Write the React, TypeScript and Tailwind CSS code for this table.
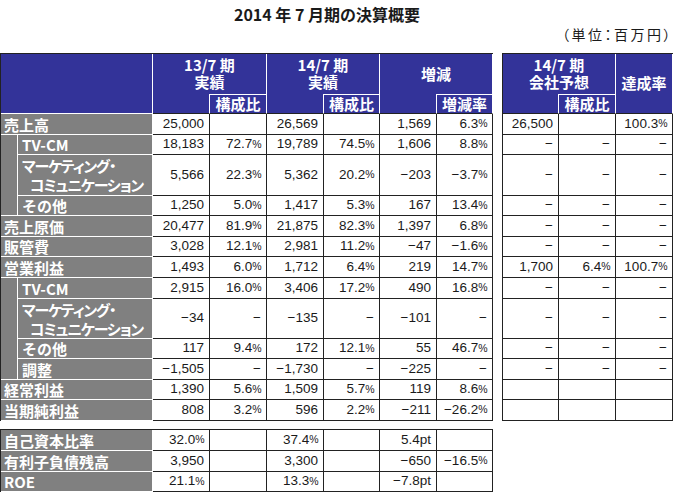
import React from "react";

type Kind = "top" | "sub" | "subLast";
interface RowDef {
  label: string;
  label2?: string;
  kind: Kind;
  h: string;
  vals: string[];
  right: string[];
}

const D = "−";

const ROWS: RowDef[] = [
  { label: "売上高", kind: "top", h: "h-[21px]", vals: ["25,000", "", "26,569", "", "1,569", "6.3%"], right: ["26,500", "", "100.3%"] },
  { label: "TV-CM", kind: "sub", h: "h-[20px]", vals: ["18,183", "72.7%", "19,789", "74.5%", "1,606", "8.8%"], right: [D, D, D] },
  { label: "マーケティング・", label2: "コミュニケーション", kind: "sub", h: "h-[41px]", vals: ["5,566", "22.3%", "5,362", "20.2%", D + "203", D + "3.7%"], right: [D, D, D] },
  { label: "その他", kind: "subLast", h: "h-[20px]", vals: ["1,250", "5.0%", "1,417", "5.3%", "167", "13.4%"], right: [D, D, D] },
  { label: "売上原価", kind: "top", h: "h-[21px]", vals: ["20,477", "81.9%", "21,875", "82.3%", "1,397", "6.8%"], right: [D, D, D] },
  { label: "販管費", kind: "top", h: "h-[20px]", vals: ["3,028", "12.1%", "2,981", "11.2%", D + "47", D + "1.6%"], right: [D, D, D] },
  { label: "営業利益", kind: "top", h: "h-[21px]", vals: ["1,493", "6.0%", "1,712", "6.4%", "219", "14.7%"], right: ["1,700", "6.4%", "100.7%"] },
  { label: "TV-CM", kind: "sub", h: "h-[21px]", vals: ["2,915", "16.0%", "3,406", "17.2%", "490", "16.8%"], right: [D, D, D] },
  { label: "マーケティング・", label2: "コミュニケーション", kind: "sub", h: "h-[40px]", vals: [D + "34", D, D + "135", D, D + "101", D], right: [D, D, D] },
  { label: "その他", kind: "sub", h: "h-[20px]", vals: ["117", "9.4%", "172", "12.1%", "55", "46.7%"], right: [D, D, D] },
  { label: "調整", kind: "subLast", h: "h-[21px]", vals: [D + "1,505", D, D + "1,730", D, D + "225", D], right: [D, D, D] },
  { label: "経常利益", kind: "top", h: "h-[20px]", vals: ["1,390", "5.6%", "1,509", "5.7%", "119", "8.6%"], right: ["", "", ""] },
  { label: "当期純利益", kind: "top", h: "h-[21px]", vals: ["808", "3.2%", "596", "2.2%", D + "211", D + "26.2%"], right: ["", "", ""] },
];

const BOTTOM: RowDef[] = [
  { label: "自己資本比率", kind: "top", h: "h-[21px]", vals: ["32.0%", "", "37.4%", "", "5.4pt", ""], right: [] },
  { label: "有利子負債残高", kind: "top", h: "h-[21px]", vals: ["3,950", "", "3,300", "", D + "650", D + "16.5%"], right: [] },
  { label: "ROE", kind: "top", h: "h-[20px]", vals: ["21.1%", "", "13.3%", "", D + "7.8pt", ""], right: [] },
];

const LW = ["w-[57px]", "w-[57px]", "w-[57px]", "w-[56px]", "w-[57px]", "w-[56px]"];
const RW = ["w-[56px]", "w-[57px]", "w-[57px]"];

const JP = "font-['Noto_Sans_CJK_JP',sans-serif]";
const NUM = "font-['Liberation_Sans',Arial,sans-serif] text-[13.5px] text-[#1a1a1a]";

function Num({ v }: { v: string }) {
  if (v.endsWith("%")) {
    return (
      <>
        {v.slice(0, -1)}
        <span className="text-[10.5px] tracking-[-0.5px]">%</span>
      </>
    );
  }
  return <>{v}</>;
}

function DataCell({ w, v }: { w: string; v: string }) {
  return (
    <div className={`${w} shrink-0 flex items-center justify-end pr-[5px] border-r border-b border-[#222] ${NUM}`}>
      <Num v={v} />
    </div>
  );
}

function LabelCells({ r }: { r: RowDef }) {
  const lab = `${JP} text-white font-bold text-[15px] leading-[19px] whitespace-nowrap`;
  if (r.kind === "top") {
    return (
      <div className={`w-[152px] shrink-0 flex items-center pl-[3px] bg-[#808080] border-r border-b border-white ${lab}`}>
        {r.label}
      </div>
    );
  }
  return (
    <>
      <div
        className={
          r.kind === "subLast"
            ? "w-[17px] shrink-0 bg-[#808080] border-r border-b border-white"
            : "w-[17px] shrink-0 bg-[#808080] border-r border-white"
        }
      />
      <div className={`w-[135px] shrink-0 flex flex-col justify-center pl-[4px] bg-[#808080] border-r border-b border-white ${lab}`}>
        {r.label2 ? (
          <div className="tracking-[-1.2px] [font-feature-settings:'palt']">
            {r.label}
            <br />
            <span className="pl-[8px]">{r.label2}</span>
          </div>
        ) : (
          <div>{r.label}</div>
        )}
      </div>
    </>
  );
}

function HeadGroup({ w, wa, wb, line1, line2, sub }: { w: string; wa: string; wb: string; line1: string; line2?: string; sub: string }) {
  return (
    <div className={`${w} shrink-0 h-[60px] flex flex-col`}>
      <div className="h-[40px] pb-[2px] bg-[#333399] border-r border-white flex items-center justify-center text-center leading-[17px]">
        <div>
          {line1}
          {line2 && (
            <>
              <br />
              {line2}
            </>
          )}
        </div>
      </div>
      <div className="h-[20px] flex">
        <div className={`${wa} shrink-0 bg-[#333399] border-r border-b border-r-white border-b-[#222]`} />
        <div className={`${wb} shrink-0 bg-[#333399] border-t border-r border-b border-t-white border-r-white border-b-[#222] flex items-center justify-center leading-[18px]`}>
          {sub}
        </div>
      </div>
    </div>
  );
}

export default function App() {
  const headText = `${JP} text-white font-bold text-[15px]`;
  return (
    <div className="w-[673px] h-[492px] bg-white overflow-hidden text-[#1a1a1a]">
      <div className={`h-[27px] flex items-center justify-center pr-[19px] text-[16px] font-bold ${JP}`}>
        2014 年 7 月期の決算概要
      </div>
      <div className={`h-[14px] mb-[12px] flex items-center justify-end text-[14px] leading-none tracking-[2.5px] [font-feature-settings:'palt'] ${JP}`}>
        （単位：百万円）
      </div>

      <div className="flex gap-[9px]">
        {/* left table */}
        <div className="w-[493px] shrink-0 border-l border-t border-[#222]">
          <div className={`flex h-[60px] ${headText}`}>
            <div className="w-[152px] shrink-0 h-[60px] bg-[#333399] border-r border-b border-white" />
            <HeadGroup w="w-[114px]" wa="w-[57px]" wb="w-[57px]" line1="13/7 期" line2="実績" sub="構成比" />
            <HeadGroup w="w-[113px]" wa="w-[57px]" wb="w-[56px]" line1="14/7 期" line2="実績" sub="構成比" />
            <HeadGroup w="w-[113px]" wa="w-[57px]" wb="w-[56px]" line1="増減" sub="増減率" />
          </div>
          {ROWS.map((r, i) => (
            <div key={i} className={`flex ${r.h}`}>
              <LabelCells r={r} />
              {r.vals.map((v, j) => (
                <DataCell key={j} w={LW[j]} v={v} />
              ))}
            </div>
          ))}
        </div>

        {/* right table */}
        <div className="w-[171px] shrink-0 self-start border-l border-t border-[#222]">
          <div className={`flex h-[60px] ${headText}`}>
            <HeadGroup w="w-[113px]" wa="w-[56px]" wb="w-[57px]" line1="14/7 期" line2="会社予想" sub="構成比" />
            <div className="w-[57px] shrink-0 h-[60px] bg-[#333399] border-r border-b border-r-white border-b-[#222] flex items-center justify-center">
              達成率
            </div>
          </div>
          {ROWS.map((r, i) => (
            <div key={i} className={`flex ${r.h}`}>
              {r.right.map((v, j) => (
                <DataCell key={j} w={RW[j]} v={v} />
              ))}
            </div>
          ))}
        </div>
      </div>

      {/* bottom table */}
      <div className="mt-[8px] w-[493px] border-l border-t border-[#222]">
        {BOTTOM.map((r, i) => (
          <div key={i} className={`flex ${r.h}`}>
            <LabelCells r={r} />
            {r.vals.map((v, j) => (
              <DataCell key={j} w={LW[j]} v={v} />
            ))}
          </div>
        ))}
      </div>
    </div>
  );
}
